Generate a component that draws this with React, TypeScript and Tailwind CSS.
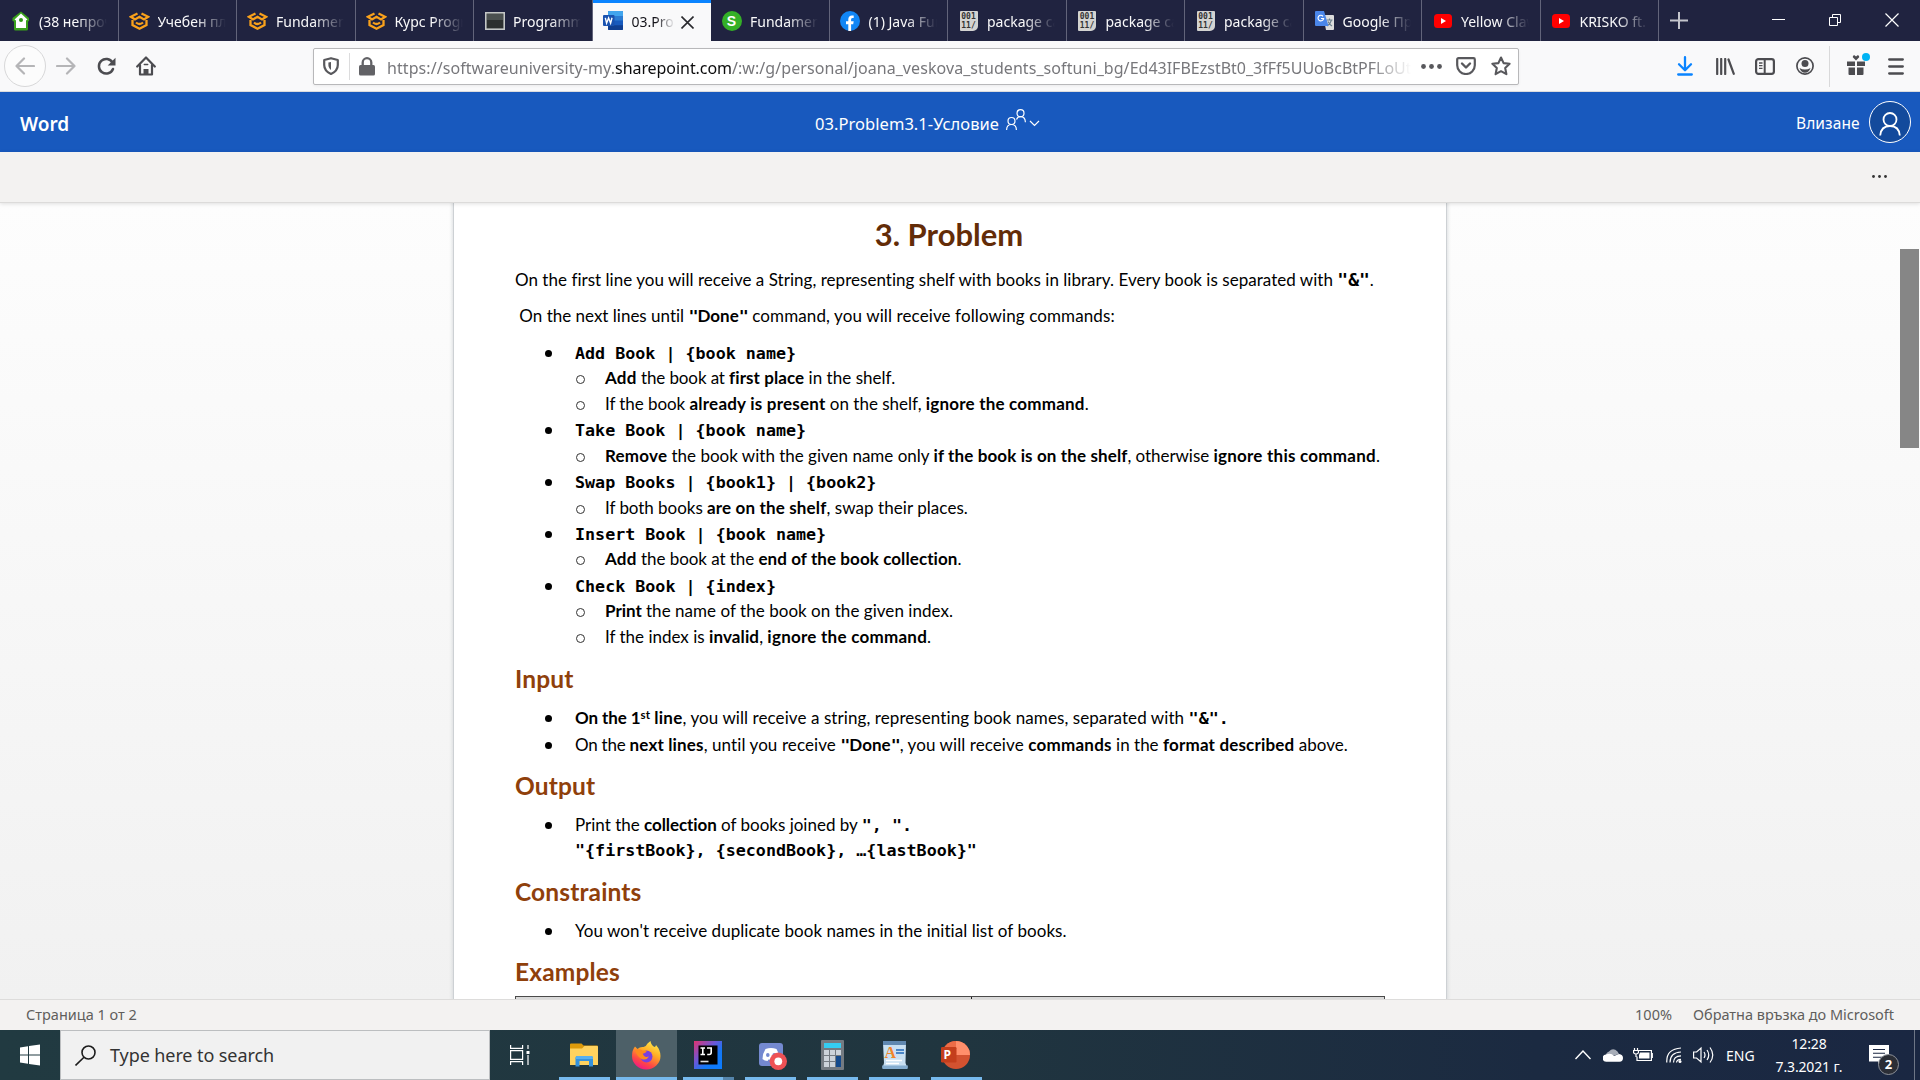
import React from 'react';

const NOTO = "font-['Noto_Sans','Open_Sans',sans-serif]";

/* ---------- text runs of the document ---------- */

function R({ t = '', children }: { t?: string; children: React.ReactNode }) {
  return <span className={t}>{children}</span>;
}
function B({ t = '', children }: { t?: string; children: React.ReactNode }) {
  return <b className={'font-bold ' + t}>{children}</b>;
}
function M({ t = 'text-[16.7px]', children }: { t?: string; children: React.ReactNode }) {
  return (
    <b className={"font-['DejaVu_Sans_Mono',monospace] leading-none font-bold " + t}>{children}</b>
  );
}
const Q = () => <M t="text-[16.7px] tracking-[-1px]">"</M>;
function Line({ h, children }: { h: string; children: React.ReactNode }) {
  return <div className={'pl-[1px] leading-[26px] whitespace-pre ' + h}>{children}</div>;
}
function Bullet({ h, children }: { h: string; children: React.ReactNode }) {
  return (
    <li className={'flex leading-[26px] whitespace-pre ' + h}>
      <span className="mt-[10px] ml-[31px] h-[7px] w-[7px] shrink-0 rounded-full bg-black" />
      <span className="ml-[23px]">{children}</span>
    </li>
  );
}
function Sub({ h, children }: { h: string; children: React.ReactNode }) {
  return (
    <li className={'flex leading-[26px] whitespace-pre ' + h}>
      <span className="mt-[10px] ml-[62px] h-[9px] w-[9px] shrink-0 rounded-full border border-[#333]" />
      <span className="ml-[20px]">{children}</span>
    </li>
  );
}
function H({ h, children }: { h: string; children: React.ReactNode }) {
  return (
    <h2 className={'pl-[1px] text-[24.5px] leading-[26px] font-bold tracking-[0.15px] text-[#8f400b] ' + h}>{children}</h2>
  );
}

/* ---------- tab icons ---------- */

const HouseIcon = () => (
  <svg width="20" height="20" viewBox="0 0 20 20">
    <path d="M10 .5 18 7v3l-1 .5V18q0 1.500-1.500 1.500h-11Q3 19.500 3 18v-7.500L1.500 10V7z" fill="#3aa11b" />
    <path d="M10 2.500 16.500 8.500 15 9.500V17H5V9.500L3.500 8.500z" fill="#fff" />
    <circle cx="10" cy="9" r="2" fill="#2f9a14" />
  </svg>
);
const SoftUniIcon = () => (
  <svg width="21" height="18" viewBox="0 0 21 18" fill="none" stroke="#f9a11b" strokeWidth="2.300">
    <path d="M8.500 1.500 1.800 4.800 6 7.500l4.500-2.700L15 7.500l4.200-2.700L12.500 1.500" />
    <path d="M3.500 8v5l7 3.700 7-3.700V8" />
    <path d="M7 10.500q3.500 3 7 0" />
  </svg>
);
const TerminalIcon = () => (
  <svg width="20" height="18" viewBox="0 0 20 18">
    <rect x=".8" y=".8" width="18.400" height="16.400" fill="#2c2f2f" stroke="#c3c6c6" strokeWidth="1.600" />
    <rect x="2" y="2" width="16" height="6" fill="#4b5050" />
  </svg>
);
const WordIcon = () => (
  <svg width="20" height="19" viewBox="0 0 20 19">
    <rect x="5" width="15" height="19" rx="1" fill="#185abd" />
    <path d="M5 1q0-1 1-1h13q1 0 1 1v4H5z" fill="#41a5ee" />
    <path d="M5 5h15v4.500H5z" fill="#2b7cd3" />
    <path d="M5 14.300h15V18q0 1-1 1H6q-1 0-1-1z" fill="#103f91" />
    <rect y="4" width="11.500" height="11" rx="1" fill="#1a53b0" />
    <path d="m2.300 6.800 1.300 5.400 2-5.200 2 5.200 1.400-5.400" stroke="#fff" strokeWidth="1.400" fill="none" />
  </svg>
);
const SIcon = () => (
  <span className="flex h-[20px] w-[20px] items-center justify-center rounded-full bg-[#34b027] font-['Liberation_Sans',sans-serif] text-[14px] leading-none font-bold text-white">
    S
  </span>
);
const FacebookIcon = () => (
  <svg width="20" height="20" viewBox="0 0 20 20">
    <circle cx="10" cy="10" r="10" fill="#1186f5" />
    <path d="M8.300 20v-6.800H6v-3h2.300V8.300c0-2.700 1.500-3.900 3.600-3.900.9 0 1.800.1 1.800.1v2.400h-1.200c-1.200 0-1.400.8-1.400 1.500v1.800h2.600l-.5 3h-2.100V20z" fill="#fff" />
  </svg>
);
const PastebinIcon = () => (
  <span className="flex h-[20px] w-[18px] flex-col items-center justify-center rounded-[1px] rounded-br-[5px] bg-[#d3d3d1] font-['DejaVu_Sans_Mono',monospace] text-[8px] leading-[9px] font-bold text-[#333]">
    <span>001</span>
    <span>11/</span>
  </span>
);
const TranslateIcon = () => (
  <svg width="19" height="19" viewBox="0 0 19 19">
    <path d="M8 4h10q1 0 1 1v13q0 1-1 1h-7z" fill="#dcdcdc" />
    <path d="M11.500 9h6M14.500 7.500V9M16.500 9q-1 4-4.500 6M13 10.500q1.500 3 4 4.500" stroke="#6b7f8c" fill="none" strokeWidth="1.100" />
    <path d="M1 0h8l4.500 15H1q-1 0-1-1V1q0-1 1-1z" fill="#4a86ea" />
    <path d="M8 5.300A2.800 2.800 0 1 0 8.600 7.500H6" stroke="#fff" fill="none" strokeWidth="1.200" />
  </svg>
);
const YoutubeIcon = () => (
  <svg width="18" height="14" viewBox="0 0 18 14">
    <rect width="18" height="14" rx="3.500" fill="#f00" />
    <path d="M7 4v6l5-3z" fill="#fff" />
  </svg>
);

const tabs: { icon: React.ReactNode; text: string; active?: boolean }[] = [
  { icon: <HouseIcon />, text: '(38 непрочетени)' },
  { icon: <SoftUniIcon />, text: 'Учебен план' },
  { icon: <SoftUniIcon />, text: 'Fundamentals' },
  { icon: <SoftUniIcon />, text: 'Курс Programming' },
  { icon: <TerminalIcon />, text: 'Programming' },
  { icon: <WordIcon />, text: '03.Problem', active: true },
  { icon: <SIcon />, text: 'Fundamentals' },
  { icon: <FacebookIcon />, text: '(1) Java Fundam' },
  { icon: <PastebinIcon />, text: 'package cards' },
  { icon: <PastebinIcon />, text: 'package cards' },
  { icon: <PastebinIcon />, text: 'package cards' },
  { icon: <TranslateIcon />, text: 'Google Преводач' },
  { icon: <YoutubeIcon />, text: 'Yellow Claw' },
  { icon: <YoutubeIcon />, text: 'KRISKO ft. X' },
];

function TabStrip() {
  return (
    <div className={'flex h-[41px] bg-[#202340] text-[14px] text-[#f9f9fa] ' + NOTO}>
      {tabs.map((t, i) => (
        <div
          key={i}
          className={
            'flex w-[118.5px] shrink-0 items-center pl-[10px] ' +
            (t.active
              ? 'border-t-[3px] border-[#0a84ff] bg-[#f9f9fa] pb-[3px] text-[#15141a]'
              : 'border-r border-[#62647a]')
          }
        >
          <span className="flex w-[21px] shrink-0 justify-center">{t.icon}</span>
          <span
            className={
              'ml-[8px] overflow-hidden pt-[2px] whitespace-pre [mask-image:linear-gradient(to_right,black_55%,transparent)] ' +
              (t.active ? 'w-[43px]' : 'w-[68px]')
            }
          >
            {t.text}
          </span>
          {t.active && (
            <svg className="mt-[3px] ml-[6px]" width="13" height="13" viewBox="0 0 13 13" stroke="#2a2a2e" strokeWidth="1.600">
              <path d="m.5.5 12 12M12.500.5l-12 12" />
            </svg>
          )}
        </div>
      ))}
      <svg className="mt-[12px] ml-[11px]" width="18" height="17" viewBox="0 0 18 17" stroke="#c4c5cc" strokeWidth="2">
        <path d="M9 0v17M0 8.500h18" />
      </svg>
      <svg className="mt-[13px] ml-[84px]" width="13" height="14" viewBox="0 0 13 14" stroke="#fff">
        <path d="M0 6.500h13" />
      </svg>
      <svg className="mt-[13px] ml-[44px]" width="13" height="14" viewBox="0 0 13 14" stroke="#fff" fill="none">
        <path d="M.5 4.500h8v8h-8zM3.500 4.500v-3h8v8h-3" />
      </svg>
      <svg className="mt-[13px] ml-[43px]" width="14" height="14" viewBox="0 0 14 14" stroke="#fff" strokeWidth="1.200">
        <path d="m.5.5 13 13M13.500.5l-13 13" />
      </svg>
    </div>
  );
}

function Toolbar() {
  return (
    <div className="flex h-[51px] items-center border-b border-[#dcdcde] bg-[#f9f9fa]">
      <span className="ml-[4px] flex h-[42px] w-[42px] items-center justify-center rounded-full border border-[#d8d8d9] bg-[#fcfcfc]">
        <svg width="20" height="18" viewBox="0 0 20 18" fill="none" stroke="#b5b5b7" strokeWidth="2.200" strokeLinecap="round" strokeLinejoin="round">
          <path d="M19 9H1.500M9 1.500 1.500 9 9 16.500" />
        </svg>
      </span>
      <svg className="ml-[10px]" width="20" height="18" viewBox="0 0 20 18" fill="none" stroke="#b5b5b7" strokeWidth="2.200" strokeLinecap="round" strokeLinejoin="round">
        <path d="M1 9h17.500M11 1.500 18.500 9 11 16.500" />
      </svg>
      <svg className="ml-[20px]" width="20" height="19" viewBox="0 0 20 19" fill="none" stroke="#4c4c50" strokeWidth="2.500">
        <path d="M16.500 5.500A7.300 7.300 0 1 0 17 12" strokeLinecap="round" />
        <path d="M19.500.8v7.700h-7.800z" fill="#4c4c50" stroke="none" />
      </svg>
      <svg className="ml-[20px]" width="20" height="20" viewBox="0 0 20 20" fill="none" stroke="#4c4c50" strokeWidth="2.200" strokeLinejoin="round" strokeLinecap="round">
        <path d="M1.200 10.500 10 1.500l8.800 9" />
        <path d="M4 9v9.500h12V9" />
        <path d="M10 18.500V13" strokeWidth="5" strokeLinecap="butt" />
        <path d="M8.300 8.500h3.400" strokeWidth="1.500" />
      </svg>
      <div className="ml-[157px] flex h-[37px] w-[1206px] items-center rounded-[2px] border border-[#b8b8ba] bg-white shadow-[0_1px_3px_rgba(0,0,0,0.06)]">
        <svg className="ml-[9px]" width="16" height="18" viewBox="0 0 16 18" fill="none" stroke="#58585c" strokeWidth="2.200">
          <path d="M8 1.200 14.800 3v5c0 4-2.500 7-6.800 9-4.300-2-6.800-5-6.800-9V3z" strokeLinejoin="round" />
          <path d="M8 5v8c-1.600-1.200-2.600-3-2.600-5V5.600z" fill="#58585c" stroke="none" />
        </svg>
        <span className="ml-[10px] h-[27px] w-px bg-[#dcdcdd]" />
        <svg className="ml-[9px]" width="16" height="19" viewBox="0 0 16 19">
          <path d="M3.700 9V5.500a4.300 4.300 0 0 1 8.600 0V9" fill="none" stroke="#626266" strokeWidth="2.300" />
          <rect y="8" width="16" height="10.500" rx="1.500" fill="#626266" />
        </svg>
        <div
          className={
            'ml-[12px] w-[1024px] overflow-hidden pt-[3px] text-[16px] leading-[24px] whitespace-pre text-[#77777b] [mask-image:linear-gradient(to_right,black_96%,transparent)] ' +
            NOTO
          }
        >
          <span className="tracking-[0.07px]">https://softwareuniversity-my.</span>
          <span className="tracking-[-0.06px] text-[#0c0c0d]">sharepoint.com</span>
          <span className="tracking-[0.07px]">/:w:/g/personal/joana_veskova_students_softuni_bg/</span>
          <span>Ed43IFBEzstBt0_3fFf5UUoBcBtPFLoUt</span>
        </div>
        <svg className="ml-[10px]" width="21" height="5" viewBox="0 0 21 5" fill="#58585c">
          <circle cx="2.500" cy="2.500" r="2.400" />
          <circle cx="10.500" cy="2.500" r="2.400" />
          <circle cx="18.500" cy="2.500" r="2.400" />
        </svg>
        <svg className="ml-[14px]" width="20" height="18" viewBox="0 0 20 18" fill="none" stroke="#58585c" strokeWidth="2.200" strokeLinecap="round" strokeLinejoin="round">
          <path d="M2.500 1.200h15q1.300 0 1.300 1.300v5.700a8.800 8.800 0 0 1-17.600 0V2.500q0-1.300 1.300-1.300z" />
          <path d="M6 6.500l4 4 4-4" strokeWidth="2.400" />
        </svg>
        <svg className="ml-[15px]" width="20" height="20" viewBox="0 0 20 20" fill="none" stroke="#58585c" strokeWidth="2.100" strokeLinejoin="round">
          <path d="m10 1.500 2.600 5.600 6 .7-4.400 4.200 1.200 6.200L10 15.200l-5.400 3 1.200-6.200L1.400 7.800l6-.7z" />
        </svg>
      </div>
      <svg className="ml-[158px]" width="16" height="20" viewBox="0 0 16 20" fill="none" stroke="#0a84ff" strokeWidth="2.300" strokeLinecap="round" strokeLinejoin="round">
        <path d="M8 1.200v12.500M2 8.200l6 6 6-6M1.200 18.500h13.600" />
      </svg>
      <svg className="ml-[23px]" width="19" height="17" viewBox="0 0 19 17" fill="none" stroke="#4c4c50" strokeWidth="2.200" strokeLinecap="round">
        <path d="M1.200 1v15M5.200 1v15M9.200 1v15M12.500 1.500l5.300 14.300" />
      </svg>
      <svg className="ml-[20px]" width="20" height="17" viewBox="0 0 20 17" fill="none" stroke="#4c4c50">
        <rect x="1.100" y="1.100" width="17.800" height="14.800" rx="2.300" strokeWidth="2.200" />
        <path d="M9.700 1v15" strokeWidth="2" />
        <path d="M4 5h3.500M4 7.700h3.500M4 10.300h3.500" strokeWidth="1.300" />
      </svg>
      <svg className="ml-[21px]" width="18" height="18" viewBox="0 0 18 18">
        <circle cx="9" cy="9" r="8.100" fill="none" stroke="#4c4c50" strokeWidth="1.700" />
        <circle cx="9" cy="6.500" r="3.500" fill="#4c4c50" />
        <path d="M3.500 11q2.500 1.500 5.500 1.500t5.500-1.500q-1.500 4.700-5.500 4.700T3.500 11z" fill="#4c4c50" />
      </svg>
      <span className="ml-[15px] h-[41px] w-px bg-[#d9d9da]" />
      <svg className="mb-[4px] ml-[17px]" width="23" height="23" viewBox="0 0 23 23" fill="#4c4c50">
        <path d="M0 8.500h8V13H0zM10 8.500h8V13h-8zM1.500 14.500H8V22H2.500q-1 0-1-1zM10 14.500h6.500V21q0 1-1 1H10z" />
        <path d="M9 7.500 5.800 4.300Q5.500 2 7.500 2.200L9 3.500l1.500-1.300q2-.2 1.700 2.100z" />
        <circle cx="19" cy="4" r="4" fill="#00b3f4" />
      </svg>
      <svg className="ml-[18px]" width="16" height="17" viewBox="0 0 16 17" stroke="#4c4c50" strokeWidth="2.300" strokeLinecap="round">
        <path d="M1.200 1.500h13.600M1.200 8.500h13.600M1.200 15.500h13.600" />
      </svg>
    </div>
  );
}

function WordHeader() {
  return (
    <header className={'grid h-[60px] grid-cols-[815px_1fr_auto] items-center bg-[#1859be] text-white ' + NOTO}>
      <span className="pt-[4px] pl-[20px] text-[19px] font-semibold">Word</span>
      <span className="flex items-center">
        <span className="w-[184px] pt-[4px] text-[16.5px] tracking-[0.05px] whitespace-pre">03.Problem3.1-Условие</span>
        <svg className="mb-[4px] ml-[7px]" width="34" height="22" viewBox="0 0 34 22" fill="none" stroke="#fff" strokeWidth="1.200">
          <circle cx="5.500" cy="12" r="3.500" />
          <path d="M.6 21q0-5.500 4.900-5.500t4.900 5.500" />
          <circle cx="14.500" cy="4.200" r="3.500" />
          <path d="M10.500 10.500q1-2.800 4-2.800 4.700 0 4.900 5.500" />
          <path d="m24 12 4.500 4.500L33 12" />
        </svg>
      </span>
      <span className="flex items-center pr-[9px]">
        <span className="w-[64px] pt-[4px] text-[15.5px] tracking-[0.1px]">Влизане</span>
        <span className="ml-[9px] flex h-[42px] w-[42px] items-center justify-center rounded-full border border-white bg-[#134a9c]">
          <svg className="mt-[3px]" width="22" height="24" viewBox="0 0 22 24" fill="none" stroke="#fff" strokeWidth="1.800">
            <circle cx="11" cy="7.500" r="6.500" />
            <path d="M1.200 23.500Q2 14 11 14t9.800 9.500" />
          </svg>
        </span>
      </span>
    </header>
  );
}

function Page() {
  return (
    <article className="h-full w-[994px] border-x border-x-[#cdd1d4] bg-white pt-[15px] pr-[60px] pl-[60px] font-['Lato','Carlito',sans-serif] text-[17px] text-black shadow-[0_0_3px_1px_rgba(200,205,208,0.6)] [font-variant-ligatures:none]">
      <h1 className="h-[49px] pr-[2px] text-center text-[31px] leading-[32px] font-bold text-[#632c07]">3. Problem</h1>
      <Line h="h-[36px]">
        <R t="tracking-[0.03px]">On the first line you will receive a String, representing shelf with books in library. Every book is separated with </R>
        <M t="text-[18px]">"&amp;"</M>.
      </Line>
      <Line h="h-[37px]">
        {' '}On the next lines until <Q /><B>Done</B><Q />
        <R t="tracking-[0.11px]"> command, you will receive following commands:</R>
      </Line>
      <ul>
        <Bullet h="h-[25px]"><M>Add Book | {'{book name}'}</M></Bullet>
        <Sub h="h-[26px]">
          <B t="tracking-[0.24px]">Add </B><R t="tracking-[-0.12px]">the book at </R><B t="tracking-[0.08px]">first place</B><R t="tracking-[0.03px]"> in the shelf.</R>
        </Sub>
        <Sub h="h-[26px]">
          <R t="tracking-[-0.06px]">If the book </R><B t="tracking-[0.22px]">already is present</B><R> on the shelf, </R><B t="tracking-[0.2px]">ignore the command</B>.
        </Sub>
        <Bullet h="h-[26px]"><M>Take Book | {'{book name}'}</M></Bullet>
        <Sub h="h-[26px]">
          <B t="tracking-[0.2px]">Remove </B><R>the book with the given name only </R><B t="tracking-[0.12px]">if the book is on the shelf</B><R t="tracking-[-0.05px]">, otherwise </R><B t="tracking-[0.24px]">ignore this command</B>.
        </Sub>
        <Bullet h="h-[26px]"><M>Swap Books | {'{book1} | {book2}'}</M></Bullet>
        <Sub h="h-[26px]">
          <R t="tracking-[-0.04px]">If both books </R><B t="tracking-[0.15px]">are on the shelf</B><R t="tracking-[0.06px]">, swap their places.</R>
        </Sub>
        <Bullet h="h-[25px]"><M>Insert Book | {'{book name}'}</M></Bullet>
        <Sub h="h-[27px]">
          <B t="tracking-[0.24px]">Add </B><R t="tracking-[-0.06px]">the book at the </R><B t="tracking-[0.08px]">end of the book collection</B>.
        </Sub>
        <Bullet h="h-[25px]"><M>Check Book | {'{index}'}</M></Bullet>
        <Sub h="h-[26px]">
          <B>Print </B><R t="tracking-[0.04px]">the name of the book on the given index.</R>
        </Sub>
        <Sub h="h-[42px]">
          <R>If the index is </R><B t="tracking-[0.12px]">invalid</B><R>, </R><B t="tracking-[0.25px]">ignore the command</B>.
        </Sub>
      </ul>
      <H h="h-[39px]">Input</H>
      <ul>
        <Bullet h="h-[27px]">
          <B t="tracking-[-0.09px]">On the 1</B><B t="relative -top-[5px] text-[11.5px] leading-none">st</B><B t="tracking-[0.24px]"> line</B>
          <R t="tracking-[0.08px]">, you will receive a string, representing book names, separated with </R><M>"&amp;".</M>
        </Bullet>
        <Bullet h="h-[41px]">
          <R t="tracking-[-0.23px]">On the </R><B t="tracking-[0.15px]">next lines</B><R t="tracking-[0.09px]">, until you receive </R><Q /><B>Done</B><Q />
          <R t="tracking-[0.08px]">, you will receive </R><B t="tracking-[0.25px]">commands</B><R> in the </R><B t="tracking-[0.18px]">format described</B><R> above.</R>
        </Bullet>
      </ul>
      <H h="h-[39px]">Output</H>
      <ul>
        <Bullet h="h-[25px]">
          <R>Print the </R><B t="tracking-[-0.09px]">collection</B><R> of books joined by </R><M>", ".</M>
        </Bullet>
        <li className="h-[42px] pl-[61px] leading-[26px] whitespace-pre"><M>"{'{firstBook}, {secondBook}, …{lastBook}'}"</M></li>
      </ul>
      <H h="h-[39px]">Constraints</H>
      <ul>
        <Bullet h="h-[41px]"><R t="tracking-[0.05px]">You won't receive duplicate book names in the initial list of books.</R></Bullet>
      </ul>
      <H h="h-[37px]">Examples</H>
      <div className="ml-[1px] flex h-[20px] w-[870px] border border-[#4a4a4a] bg-[#d9d9d9]">
        <span className="w-[456px] border-r border-[#222]" />
      </div>
    </article>
  );
}

/* ---------- taskbar icons ---------- */

const ExplorerIcon = () => (
  <svg width="28" height="24" viewBox="0 0 28 24">
    <path d="M0 1.500Q0 .5 1 .5h10.500l2 2H27q1 0 1 1V9H0z" fill="#dd9a0a" />
    <path d="M0 5.500h12l2.500-2.500H27q1 0 1 1v18H0z" fill="#ffd25e" />
    <path d="M5.500 23.500V15q0-2 2-2H21q2 0 2 2v8.500h-4V18H9.500v5.500z" fill="#3592dc" />
    <path d="M5.500 16v-1q0-2 2-2H21q2 0 2 2v1z" fill="#57b0ef" />
  </svg>
);
const FirefoxIcon = () => (
  <svg width="29" height="29" viewBox="0 0 29 29">
    <defs>
      <linearGradient id="fx" x1=".8" y1="0" x2=".3" y2="1">
        <stop offset="0" stopColor="#fff04f" />
        <stop offset=".4" stopColor="#ffab25" />
        <stop offset=".75" stopColor="#ff4745" />
        <stop offset="1" stopColor="#f0158a" />
      </linearGradient>
    </defs>
    <path d="M3 5.500 5.500 8Q8 5.500 11.500 6q3-1 4-3.500L18.500 0q.5 4 4 6 1.500-.5 1.500-2 4.500 5 4.500 11a14.200 13.500 0 0 1-28.500 0Q0 9 3 5.500z" fill="url(#fx)" />
    <circle cx="14.500" cy="15.500" r="6" fill="#7a3fe0" />
    <path d="M3 9q4-1.500 7.500.5l4.500.3q-1 2.400-4.200 3 1.200 4.200 6.200 2.700-2.500 4.500-7.500 2.500Q4.500 15 3 9z" fill="#ff8a1e" />
  </svg>
);
const IntelliJIcon = () => (
  <svg width="28" height="28" viewBox="0 0 28 28">
    <defs>
      <linearGradient id="ij" x1="0" y1="0" x2="1" y2="1">
        <stop offset="0" stopColor="#e0336f" />
        <stop offset=".4" stopColor="#6b57d8" />
        <stop offset=".65" stopColor="#1478f5" />
        <stop offset="1" stopColor="#0a7cff" />
      </linearGradient>
    </defs>
    <rect width="28" height="28" fill="url(#ij)" />
    <rect x="4.500" y="4.500" width="19" height="19" fill="#000" />
    <path d="M6.500 7h4.500M8.800 7v6.500M6.500 13.500h4.500M13 7h4.200v4.500q0 2-2 2h-2" stroke="#fff" strokeWidth="1.600" fill="none" />
    <path d="M6.500 20.500h8" stroke="#ddd" strokeWidth="1.600" />
  </svg>
);
const DiscordIcon = () => (
  <svg width="28" height="30" viewBox="0 0 28 30">
    <rect y="3" width="24" height="23" rx="3" fill="#7489d0" />
    <path d="M6.500 9q5.500-2 11 0 3 4.500 3 10-2.500 2-5 2l-1-1.500h-5L8.500 21q-3 0-5-2 0-5.500 3-10z" fill="#fff" />
    <ellipse cx="8.800" cy="15" rx="1.800" ry="2" fill="#7489d0" />
    <ellipse cx="15.200" cy="15" rx="1.800" ry="2" fill="#7489d0" />
    <circle cx="19.300" cy="21.300" r="8.700" fill="#ee5155" />
    <circle cx="19.300" cy="21.300" r="3.900" fill="#fff" />
  </svg>
);
const CalculatorIcon = () => (
  <svg width="23" height="30" viewBox="0 0 23 30">
    <rect width="23" height="30" rx="1" fill="#747b82" />
    <rect x="3" y="3" width="17" height="5" fill="#35cdf2" />
    <path d="M3 10h5v5H3zM9 10h5v5H9zM15 10h5v5h-5zM3 16h5v5H3zM9 16h5v5H9zM3 22h5v5H3zM9 22h5v5H9z" fill="#ccd3da" />
    <path d="M15 16h5v11h-5z" fill="#144a8c" />
  </svg>
);
const WordpadIcon = () => (
  <span className="relative flex h-[28px] w-[26px]">
    <svg width="26" height="28" viewBox="0 0 26 28">
      <path d="M1 2h23l-.5 20 2 5H.5l1.500-5z" fill="#c9e0f2" />
      <path d="M1 0h23v4H1z" fill="#6088b0" />
      <path d="M0 24.500h26L25.500 28H.5z" fill="#86aed0" />
      <path d="M14 9h8M14 12h8" stroke="#4a86c8" strokeWidth="2" />
      <path d="M4 19.500h16M4 22.500h13" stroke="#fff" strokeWidth="1.400" />
    </svg>
    <span className="absolute top-[4px] left-[3px] font-['Liberation_Serif',serif] text-[16px] leading-none font-bold text-[#f0862a]">A</span>
  </span>
);
const PowerPointIcon = () => (
  <span className="relative flex h-[28px] w-[29px]">
    <svg width="29" height="28" viewBox="0 0 29 28">
      <circle cx="15" cy="14" r="14" fill="#d35230" />
      <path d="M15 0a14 14 0 0 1 14 14H15z" fill="#ff8f6b" />
      <path d="M15 0v14H1A14 14 0 0 1 15 0z" fill="#ed6c47" />
      <rect y="6" width="15.500" height="15.500" rx="1.300" fill="#c43e1c" />
    </svg>
    <span className="absolute top-[6px] left-[3px] font-['Open_Sans',sans-serif] text-[12px] leading-[16px] font-bold text-white">P</span>
  </span>
);

function TaskButton({ w, bar, pad, children }: { w: string; bar: string; pad?: string; children: React.ReactNode }) {
  return (
    <div className={'flex h-full flex-col items-center justify-between ' + w}>
      <span className={'flex h-[47px] w-full items-center justify-center pt-[3px] ' + (pad ?? '')}>{children}</span>
      <span className={'h-[3px] bg-[#76b9ed] ' + bar} />
    </div>
  );
}

function Taskbar() {
  return (
    <footer className={'flex h-[50px] bg-[linear-gradient(to_right,#213a41,#20353f_50%,#1b2a41_80%,#1a2742)] text-white ' + NOTO}>
      <div className="flex w-[60px] items-center justify-center">
        <svg width="20" height="22" viewBox="0 0 20 22" fill="#fff">
          <path d="M0 3.500 8 2.300v8.200H0zM9 2.100 20 .5v10H9zM0 11.500h8v8.200L0 18.500zM9 11.500h11v10L9 19.900z" />
        </svg>
      </div>
      <div className="flex w-[430px] items-center border border-[#bcbec0] bg-[#f1f1f1]">
        <svg className="ml-[14px]" width="21" height="21" viewBox="0 0 21 21" fill="none" stroke="#1c1c1c" strokeWidth="1.600">
          <circle cx="13.500" cy="7.500" r="6.500" />
          <path d="M9 12.200.5 20.500" />
        </svg>
        <span className="ml-[14px] text-[18px] tracking-[-0.09px] text-[#333]">Type here to search</span>
      </div>
      <svg className="mt-[15px] ml-[20px] shrink-0" width="20" height="20" viewBox="0 0 20 20" fill="none" stroke="#fff" strokeWidth="1.200">
        <path d="M.6 0v3.400h12V0M.6 20v-3.400h12V20M.6 5.600h12v8.800H.6zM18 0v4M18 10v10" />
        <path d="M16.500 6h3v3h-3z" fill="#fff" stroke="none" />
      </svg>
      <div className="ml-[24px] flex">
        <TaskButton w="w-[62px]" bar="w-[51px] mr-[2px]" pad="pr-[2px]"><ExplorerIcon /></TaskButton>
        <TaskButton w="w-[61px] bg-[#4d6068]" bar="w-[61px]"><FirefoxIcon /></TaskButton>
        <TaskButton w="w-[62px]" bar="w-[51px] border-r-[11px] border-[#5585ac]"><IntelliJIcon /></TaskButton>
        <TaskButton w="w-[62px]" bar="w-[51px]" pad="pl-[5px]"><DiscordIcon /></TaskButton>
        <TaskButton w="w-[62px]" bar="w-[51px]"><CalculatorIcon /></TaskButton>
        <TaskButton w="w-[62px]" bar="w-[51px]" pad="pl-[1px]"><WordpadIcon /></TaskButton>
        <TaskButton w="w-[62px]" bar="w-[51px]" pad="pr-[2px]"><PowerPointIcon /></TaskButton>
      </div>
      <div className="ml-auto flex items-center text-[14px]">
        <svg width="16" height="10" viewBox="0 0 16 10" fill="none" stroke="#fff" strokeWidth="1.400">
          <path d="m.5 9 7.500-8 7.500 8" />
        </svg>
        <svg className="ml-[12px]" width="20" height="13" viewBox="0 0 20 13">
          <path d="M3 9A5 5 0 0 1 6 2.500Q10-2 14.500 2.500L16 5z" fill="#a7adb8" />
          <path d="M3.500 12.800A3.600 3.600 0 0 1 3 5.600Q8 3.500 11 7l5-2q4 .5 4 4t-3.500 3.800z" fill="#fff" />
        </svg>
        <svg className="ml-[10px]" width="20" height="14" viewBox="0 0 20 14" fill="none" stroke="#fff" strokeWidth="1.200">
          <path d="M6 2.500h12.400v10H4V8.500M19.300 5v5M1.500 0v2M4.500 0v2M.6 2.500h4.800v2.300q-2.400 2.500-4.800 0zM3 6v3" />
          <path d="M7 4.500h9.500v6H6V7z" fill="#fff" stroke="none" />
        </svg>
        <svg className="ml-[13px]" width="16" height="16" viewBox="0 0 16 16" fill="none" stroke="#fff" strokeWidth="1.200">
          <path d="M.8 15.500Q0 2 15 1M4 15.500Q4 5.500 15 5M7.500 15.500q0-6.500 7.500-6.700M10.500 15.500q.2-3 4.500-3.200" />
          <circle cx="14" cy="14.500" r="1.500" fill="#fff" stroke="none" />
        </svg>
        <svg className="ml-[11px]" width="21" height="18" viewBox="0 0 21 18" fill="none" stroke="#fff" strokeWidth="1.200">
          <path d="M.6 6h3L8 2v14l-4.400-4h-3zM11 6q2 3 0 6M14 4q3.500 5 0 10M17 1.500q5.500 7.500 0 15" />
        </svg>
        <span className="ml-[12px] w-[30px]">ENG</span>
        <span className="flex w-[106px] flex-col items-center leading-[23px] tracking-[-0.15px]">
          <span>12:28</span>
          <span>7.3.2021 г.</span>
        </span>
        <span className="relative ml-[7px] h-[40px] w-[31px]">
          <svg className="absolute top-[10px]" width="20" height="20" viewBox="0 0 20 20">
            <path d="M0 0h20v16.500h-8.500L9 20v-3.500H0z" fill="#fff" />
            <path d="M4 4.500h12M4 8.300h12M4 12.200h12" stroke="#1b2742" strokeWidth="1.100" />
          </svg>
          <span className="absolute top-[19px] left-[9px] flex h-[21px] w-[21px] items-center justify-center rounded-full border border-[#8d9199] bg-[#2b2e36] text-[13px] leading-none font-bold">
            2
          </span>
        </span>
        <span className="ml-[14px] h-[50px] w-px bg-[#6d7686]" />
        <span className="w-[5px]" />
      </div>
    </footer>
  );
}

export default function App() {
  return (
    <div className="flex h-[1080px] w-[1920px] flex-col overflow-hidden">
      <TabStrip />
      <Toolbar />
      <WordHeader />
      <div className="z-10 flex h-[51px] items-center justify-end border-b border-[#dcdbda] bg-[#f3f2f1] pr-[33px] shadow-[0_1px_4px_rgba(0,0,0,0.12)]">
        <svg className="mb-[2px]" width="15" height="3" viewBox="0 0 15 3" fill="#333">
          <circle cx="1.500" cy="1.500" r="1.400" />
          <circle cx="7.500" cy="1.500" r="1.400" />
          <circle cx="13.500" cy="1.500" r="1.400" />
        </svg>
      </div>
      <main className="flex h-[796px] justify-between overflow-hidden bg-[linear-gradient(to_bottom,#fdfdfd,#f1f1f1)]">
        <div className="ml-[453px]">
          <Page />
        </div>
        <div className="mt-[46px] mr-px h-[199px] w-[19px] bg-[#868686]" />
      </main>
      <div className={'flex h-[31px] items-center border-t border-[#dddcdb] bg-[#f3f2f1] pr-[26px] pl-[26px] text-[14.5px] text-[#605e5c] ' + NOTO}>
        <span>Страница 1 от 2</span>
        <span className="ml-auto">100%</span>
        <span className="ml-[21px] tracking-[-0.02px]">Обратна връзка до Microsoft</span>
      </div>
      <Taskbar />
    </div>
  );
}
